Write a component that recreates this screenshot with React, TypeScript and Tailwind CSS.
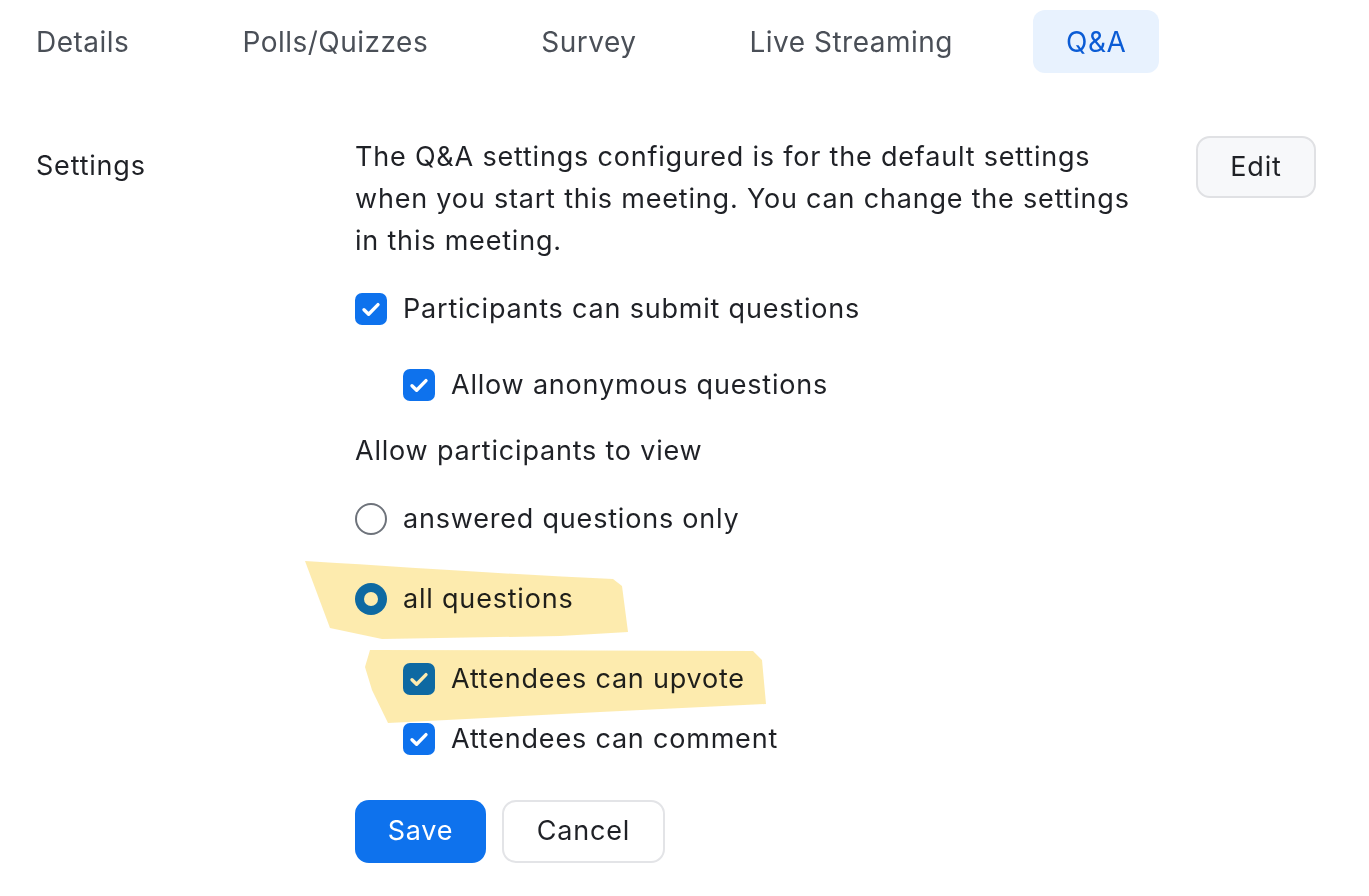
import React from "react"

const font = { fontFamily: "Inter, 'Noto Sans', sans-serif" }

function Check() {
  return (
    <span className="flex h-[32px] w-[32px] shrink-0 items-center justify-center rounded-[7px] bg-[#0e72ed]">
      <svg viewBox="0 0 32 32" className="h-[32px] w-[32px]" fill="none" stroke="white" strokeWidth="3.4" strokeLinecap="round" strokeLinejoin="round">
        <path d="M9 16.8l4.6 4.4 9.4-9.6" />
      </svg>
    </span>
  )
}

function Radio({ checked }: { checked?: boolean }) {
  return checked ? (
    <span className="flex h-[32px] w-[32px] shrink-0 items-center justify-center rounded-full bg-[#0e72ed]">
      <span className="h-[14px] w-[14px] rounded-full bg-white" />
    </span>
  ) : (
    <span className="h-[32px] w-[32px] shrink-0 rounded-full border-2 border-[#6e737b] bg-white" />
  )
}

const tabs = ["Details", "Polls/Quizzes", "Survey", "Live Streaming", "Q&A"]

export default function App() {
  return (
    <div className="relative min-h-[896px] w-[1369px] bg-white text-[27px] tracking-[0.8px] text-[#1f2126]" style={font}>
      {/* tab bar */}
      <div className="flex gap-[47px] pl-[3px] pt-[10px]">
        {tabs.map((t) => (
          <div
            key={t}
            className={`flex h-[63px] items-center rounded-[12px] px-[33px] text-[28px] tracking-[0.5px] ${
              t === "Q&A" ? "bg-[#e8f2fe] text-[#0b5cd5]" : "text-[#4a4f57]"
            }`}
          >
            {t}
          </div>
        ))}
      </div>

      {/* settings */}
      <div className="mt-[63px] flex pl-[36px] pr-[53px]">
        <div className="mt-[9px] w-[319px] shrink-0 leading-[42px]">Settings</div>
        <div className="w-[790px] shrink-0">
          <p className="leading-[42px]">
            The Q&amp;A settings configured is for the default settings when you start this meeting. You can change the settings in this meeting.
          </p>
          <div className="mt-[26px] flex h-[42px] items-center gap-[16px]">
            <Check />
            <span>Participants can submit questions</span>
          </div>
          <div className="mt-[34px] flex h-[42px] items-center gap-[16px] pl-[48px]">
            <Check />
            <span>Allow anonymous questions</span>
          </div>
          <div className="mt-[24px] flex h-[42px] items-center">Allow participants to view</div>
          <div className="mt-[26px] flex h-[42px] items-center gap-[16px]">
            <Radio />
            <span>answered questions only</span>
          </div>
          <div className="mt-[38px] flex h-[42px] items-center gap-[16px]">
            <Radio checked />
            <span>all questions</span>
          </div>
          <div className="mt-[38px] flex h-[42px] items-center gap-[16px] pl-[48px]">
            <Check />
            <span>Attendees can upvote</span>
          </div>
          <div className="mt-[18px] flex h-[42px] items-center gap-[16px] pl-[48px]">
            <Check />
            <span>Attendees can comment</span>
          </div>
          <div className="mt-[40px] flex gap-[16px]">
            <button className="h-[63px] w-[131px] rounded-[14px] bg-[#0e72ed] text-white">Save</button>
            <button className="h-[63px] w-[163px] rounded-[14px] border-2 border-[#e3e4e7] bg-white text-[#1f2126]">Cancel</button>
          </div>
        </div>
        <div className="ml-auto">
          <button className="h-[62px] w-[120px] rounded-[14px] border-2 border-[#e0e1e4] bg-[#f7f8fa] text-[#1f2126]">Edit</button>
        </div>
      </div>

      {/* marker highlights */}
      <svg className="pointer-events-none absolute left-0 top-0 mix-blend-multiply" width="1369" height="896">
        <g fill="#fbd85e" fillOpacity="0.5">
          <path d="M305 561 C 420 568, 520 575, 613 579 L 622 586 L 628 632 L 560 636 L 382 639 L 330 628 Z" />
          <path d="M370 650 L 753 651 L 762 660 L 766 704 L 600 712 L 388 723 L 372 690 L 365 667 Z" />
        </g>
      </svg>
    </div>
  )
}
